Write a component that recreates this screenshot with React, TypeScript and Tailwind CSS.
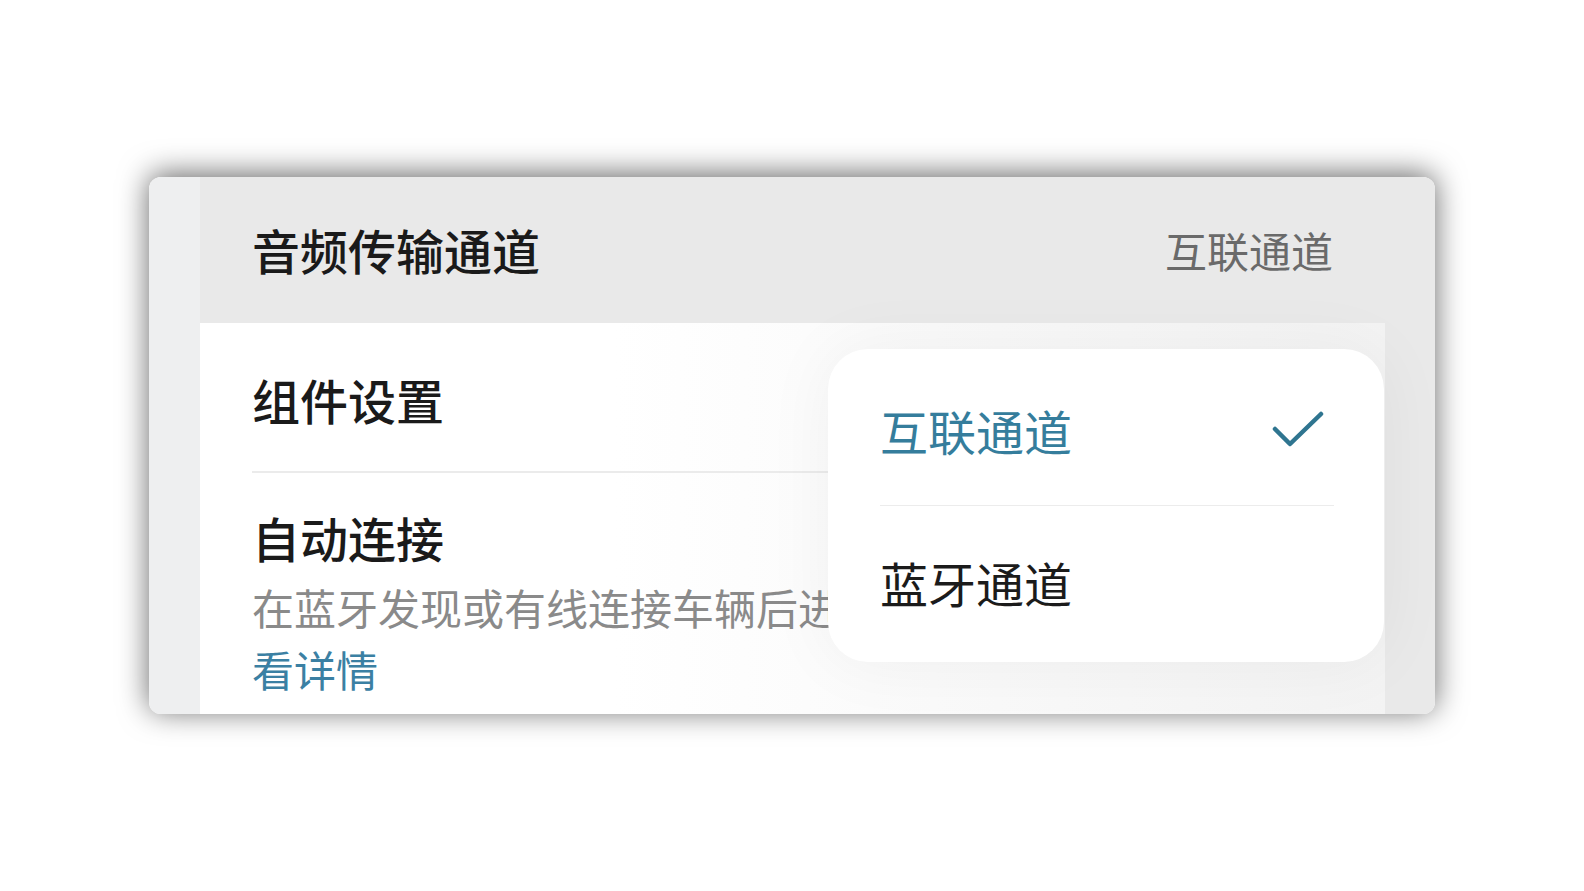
import React from "react";

const cjk = "font-['Noto_Sans_CJK_SC','Noto_Sans',sans-serif]";

const CheckMark = () => (
  <svg width="52" height="38" viewBox="0 0 52 38" fill="none">
    <path
      d="M3 18 L18 33 L49 3"
      stroke="#2f7590"
      strokeWidth="4.5"
      strokeLinecap="round"
      strokeLinejoin="round"
    />
  </svg>
);

const ChannelMenu = () => {
  const options = [
    { label: "互联通道", active: true },
    { label: "蓝牙通道", active: false },
  ];
  return (
    <div className="absolute left-[679px] top-[172px] w-[556px] h-[313px] rounded-[40px] bg-white shadow-[0_0_70px_rgba(0,0,0,0.05)] px-[52px] flex flex-col">
      {options.map((opt, i) => (
        <div
          key={opt.label}
          className={`flex-1 flex items-center justify-between ${
            i === 0 ? "border-b border-[#ececec] mr-[-2px]" : ""
          }`}
        >
          <span
            className={`text-[48px] leading-[56px] ${
              opt.active ? "text-[#357d9c]" : "text-[#1b1b1b]"
            } ${i === 0 ? "mt-[6px]" : "-mt-[4px]"}`}
          >
            {opt.label}
          </span>
          {opt.active && (
            <span className="mr-[10px] mt-[6px]">
              <CheckMark />
            </span>
          )}
        </div>
      ))}
    </div>
  );
};

export default function App() {
  return (
    <div className={`min-h-screen bg-white pt-[177px] pl-[149px] ${cjk}`}>
      <div className="relative w-[1286px] h-[537px] rounded-[12px] overflow-hidden flex shadow-[0_-3px_30px_rgba(0,0,0,0.6)]">
        <div className="w-[51px] bg-[#eeeff0]" />
        <div className="flex-1 flex flex-col bg-white">
          <div className="h-[146px] bg-[#e9e9e9] px-[52px] flex items-center justify-between">
            <span className="text-[48px] leading-[56px] font-medium text-[#1a1a1a] -mt-[2px]">
              音频传输通道
            </span>
            <span className="text-[42px] leading-[50px] text-[#6a6a6a]">
              互联通道
            </span>
          </div>
          <div className="flex-1 px-[52px] flex flex-col bg-gradient-to-r from-white from-35% to-[#f3f3f3]">
            <div className="h-[150px] flex items-center border-b-2 border-[#ebebeb]">
              <span className="text-[48px] leading-[56px] font-medium text-[#1a1a1a] mt-[3px]">
                组件设置
              </span>
            </div>
            <div className="pt-[36px] flex flex-col">
              <span className="text-[48px] leading-[56px] font-medium text-[#1a1a1a]">
                自动连接
              </span>
              <p className="mt-[11px] text-[42px] leading-[62px] text-[#8a8a8a] w-[1081px]">
                在蓝牙发现或有线连接车辆后进入互联模式。更多信息查
                <span className="text-[#3b80a3]">看详情</span>
              </p>
            </div>
          </div>
        </div>
        <div className="w-[50px] bg-[#e9e9e9]" />
        <ChannelMenu />
      </div>
    </div>
  );
}
